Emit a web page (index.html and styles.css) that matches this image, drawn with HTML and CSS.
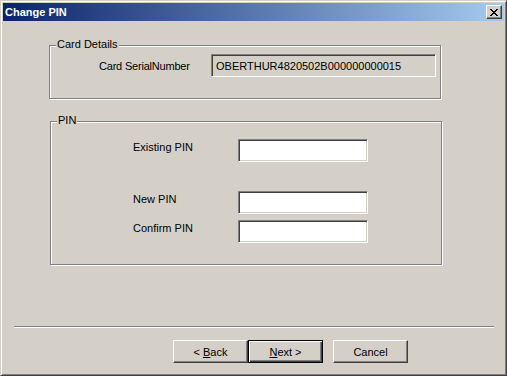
FILE: index.html
```html
<!DOCTYPE html>
<html lang="en">
<head>
  <meta charset="UTF-8" />
  <title>Change PIN</title>
  <link rel="stylesheet" href="styles.css">
</head>
<body>
  <div class="window">
    <div class="titlebar">
      <span class="title">Change PIN</span>
      <button class="close" title="Close">
        <svg width="8" height="7" viewBox="0 0 8 7" shape-rendering="crispEdges">
          <path fill="#000" d="M0 0h2v1H0zM6 0h2v1H6zM1 1h2v1H1zM5 1h2v1H5zM2 2h4v1H2zM3 3h2v1H3zM2 4h4v1H2zM1 5h2v1H1zM5 5h2v1H5zM0 6h2v1H0zM6 6h2v1H6z"/>
        </svg>
      </button>
    </div>

    <div class="content">
      <div class="group card-group">
        <span class="legend">Card Details</span>
        <div class="card-row">
          <label class="card-label">Card SerialNumber</label>
          <div class="field readonly">OBERTHUR4820502B000000000015</div>
        </div>
      </div>

      <div class="group pin-group">
        <span class="legend">PIN</span>
        <div class="pin-row first">
          <label class="pin-label" for="existingPin">Existing PIN</label>
          <input class="field" type="password" id="existingPin" />
        </div>
        <div class="pin-row">
          <label class="pin-label" for="newPin">New PIN</label>
          <input class="field" type="password" id="newPin" />
        </div>
        <div class="pin-row">
          <label class="pin-label" for="confirmPin">Confirm PIN</label>
          <input class="field" type="password" id="confirmPin" />
        </div>
      </div>
    </div>

    <div class="footer">
      <div class="separator"></div>
      <div class="buttons">
        <button class="btn">&lt; <u>B</u>ack</button>
        <button class="btn default"><u>N</u>ext &gt;</button>
        <button class="btn cancel">Cancel</button>
      </div>
    </div>
  </div>
</body>
</html>
```

FILE: styles.css
```css
* {
  box-sizing: border-box;
}

body {
  margin: 0;
  font-family: "Liberation Sans", Arial, sans-serif;
  font-size: 11px;
  color: #000;
  background: #d4d0c8;
}

.window {
  width: 507px;
  height: 376px;
  padding: 2px;
  background: #d4d0c8;
  border: 1px solid;
  border-color: #d4d0c8 #404040 #404040 #d4d0c8;
  box-shadow: inset 1px 1px 0 #fff, inset -1px -1px 0 #808080;
  display: flex;
  flex-direction: column;
}

.titlebar {
  height: 18px;
  display: flex;
  align-items: center;
  justify-content: space-between;
  padding: 0 2px;
  background: linear-gradient(to right, #0a246a, #a6caf0);
}

.title {
  color: #fff;
  font-weight: bold;
  font-size: 11px;
}

.close {
  width: 16px;
  height: 14px;
  padding: 0;
  display: flex;
  align-items: center;
  justify-content: center;
  background: #d4d0c8;
  border: 1px solid;
  border-color: #fff #404040 #404040 #fff;
  box-shadow: inset -1px -1px 0 #808080;
}

.close svg {
  display: block;
  margin-top: 1px;
}

.content {
  padding-top: 24px;
}

.group {
  position: relative;
  width: 392px;
  border: 1px solid #808080;
  box-shadow: 1px 1px 0 #fff, inset 1px 1px 0 #fff;
}

.legend {
  position: absolute;
  top: -8px;
  left: 6px;
  padding: 0 1px;
  background: #d4d0c8;
  line-height: 13px;
}

.card-group {
  margin-left: 46px;
  height: 54px;
}

.card-row {
  display: flex;
  align-items: center;
  padding: 8px 0 0 49px;
}

.card-label {
  width: 112px;
  letter-spacing: -0.2px;
}

.field {
  height: 23px;
  margin: 0;
  padding: 0 3px;
  font: inherit;
  background: #fff;
  border: 1px solid;
  border-color: #808080 #fff #fff #808080;
  box-shadow: inset 1px 1px 0 #404040, inset -1px -1px 0 #d4d0c8;
  outline: none;
}

.readonly {
  width: 225px;
  display: flex;
  align-items: center;
  padding-left: 4px;
  background: #d4d0c8;
}

.pin-group {
  margin: 22px 0 0 47px;
  height: 144px;
  padding: 17px 0 0 82px;
}

.pin-row {
  display: flex;
  align-items: flex-start;
  height: 23px;
}

.pin-row + .pin-row {
  margin-top: 6px;
}

.pin-row.first {
  margin-bottom: 29px;
}

.pin-label {
  width: 105px;
  margin-top: 2px;
  line-height: 13px;
}

.pin-row .field {
  width: 130px;
}

.separator {
  margin: 61px 0 0 11px;
  width: 480px;
  border-top: 1px solid #808080;
  border-bottom: 1px solid #fff;
}

.buttons {
  display: flex;
  padding-left: 170px;
  margin-top: 12px;
}

.btn {
  width: 75px;
  height: 23px;
  padding: 0;
  font: inherit;
  color: #000;
  background: #d4d0c8;
  border: 1px solid;
  border-color: #fff #404040 #404040 #fff;
  box-shadow: inset -1px -1px 0 #808080;
}

.btn.default {
  border-color: #000;
  box-shadow: inset 1px 1px 0 #fff, inset -1px -1px 0 #404040, inset -2px -2px 0 #808080;
}

.btn.cancel {
  margin-left: 10px;
}
```
